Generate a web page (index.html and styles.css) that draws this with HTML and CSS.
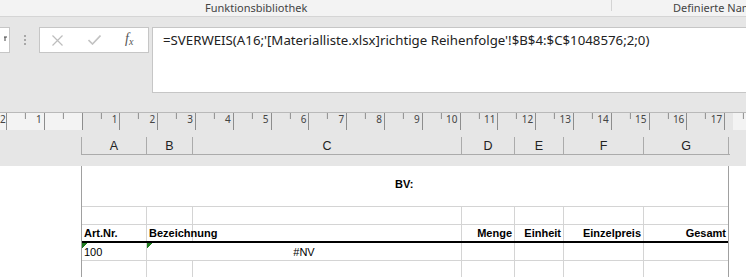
FILE: index.html
```html
<!DOCTYPE html>
<html lang="de">
<head>
    <meta charset="UTF-8">
    <title>Materialliste</title>
    <link rel="stylesheet" href="styles.css">
</head>
<body>

<!-- Ribbon group labels -->
<div class="ribbon-labels">
    <div class="group lib">Funktionsbibliothek</div>
    <div class="divider"></div>
    <div class="group names">Definierte Namen</div>
</div>

<!-- Formula bar -->
<div class="formula-bar">
    <div class="namebox">
        <svg width="4" height="8" viewBox="0 0 4 8"><path d="M0 2 L3 2 M1 2 L1 6" stroke="#444" fill="none"/></svg>
    </div>
    <div class="grip"><i></i><i></i><i></i></div>
    <div class="fx-buttons">
        <span class="btn">
            <svg width="11" height="11" viewBox="0 0 11 11"><path d="M0.5 0.5 L10.5 10.5 M10.5 0.5 L0.5 10.5" stroke="#bdbdbd" stroke-width="1.2" fill="none"/></svg>
        </span>
        <span class="btn">
            <svg width="13" height="10" viewBox="0 0 13 10"><path d="M0.5 5 L4.5 9 L12.5 0.5" stroke="#c2c2c2" stroke-width="1.6" fill="none"/></svg>
        </span>
        <span class="btn fx">f<small>x</small></span>
    </div>
    <div class="formula">=SVERWEIS(A16;'[Materialliste.xlsx]richtige Reihenfolge'!$B$4:$C$1048576;2;0)</div>
</div>

<!-- Ruler -->
<div class="ruler">
    <span class="num first">2</span>
    <span class="num">1</span>
    <span class="num"></span>
    <span class="num">1</span>
    <span class="num">2</span>
    <span class="num">3</span>
    <span class="num">4</span>
    <span class="num">5</span>
    <span class="num">6</span>
    <span class="num">7</span>
    <span class="num">8</span>
    <span class="num">9</span>
    <span class="num">10</span>
    <span class="num">11</span>
    <span class="num">12</span>
    <span class="num">13</span>
    <span class="num">14</span>
    <span class="num">15</span>
    <span class="num">16</span>
    <span class="num">17</span>
</div>

<!-- Column headers -->
<div class="col-headers">
    <div class="col a">A</div>
    <div class="col b">B</div>
    <div class="col c">C</div>
    <div class="col d">D</div>
    <div class="col e">E</div>
    <div class="col f">F</div>
    <div class="col g">G</div>
</div>

<!-- Sheet page -->
<div class="sheet">
    <div class="page">
        <div class="row title-row">
            <div class="bv">BV:</div>
        </div>
        <div class="row grid">
            <div class="cell"></div>
            <div class="cell"></div>
            <div class="cell"></div>
            <div class="cell"></div>
            <div class="cell"></div>
            <div class="cell"></div>
            <div class="cell"></div>
        </div>
        <div class="row grid head-row">
            <div class="cell">Art.Nr.</div>
            <div class="cell">Bezeichnung</div>
            <div class="cell"></div>
            <div class="cell right">Menge</div>
            <div class="cell right">Einheit</div>
            <div class="cell right">Einzelpreis</div>
            <div class="cell right">Gesamt</div>
        </div>
        <div class="row grid">
            <div class="cell flag">100</div>
            <div class="cell flag merged">#NV</div>
            <div class="cell"></div>
            <div class="cell"></div>
            <div class="cell"></div>
            <div class="cell"></div>
        </div>
        <div class="row grid">
            <div class="cell"></div>
            <div class="cell"></div>
            <div class="cell"></div>
            <div class="cell"></div>
            <div class="cell"></div>
            <div class="cell"></div>
            <div class="cell"></div>
        </div>
    </div>
</div>

</body>
</html>
```

FILE: styles.css
```css
body {
    margin: 0;
    background-color: #e6e6e6;
    font-family: "Noto Sans", "Open Sans", sans-serif;
    width: 746px;
    height: 277px;
    overflow: hidden;
}

/* ribbon labels */
.ribbon-labels {
    display: flex;
    height: 16px;
    background-color: #f3f3f3;
    border-bottom: 1px solid #d5d5d5;
    font-size: 11px;
    color: #444;
    line-height: 16px;
}

.group {
    flex: none;
    box-sizing: border-box;
    white-space: nowrap;
}

.group.lib {
    width: 611px;
    padding-left: 205px;
}

.divider {
    flex: none;
    width: 1px;
    height: 11px;
    background-color: #d4d4d4;
}

.group.names {
    padding-left: 61px;
}

/* formula bar */
.formula-bar {
    display: flex;
    align-items: flex-start;
    margin-top: 10px;
    height: 65px;
}

.namebox {
    box-sizing: border-box;
    width: 10px;
    height: 26px;
    background-color: #fff;
    border: 1px solid #c6c6c6;
    border-left: none;
    display: flex;
    align-items: center;
    justify-content: flex-end;
    padding: 0 1px 2px 0;
}

.grip {
    width: 29px;
    height: 26px;
    display: flex;
    flex-direction: column;
    align-items: center;
    justify-content: center;
    gap: 2px;
}

.grip i {
    display: block;
    width: 2px;
    height: 2px;
    background-color: #a8a8a8;
}

.fx-buttons {
    box-sizing: border-box;
    width: 110px;
    height: 26px;
    margin-right: 3px;
    background-color: #fff;
    border: 1px solid #c6c6c6;
    display: flex;
    align-items: center;
    gap: 25px;
    padding-left: 12px;
}

.btn {
    display: flex;
}

.btn.fx {
    margin-left: -1px;
    font-family: "Liberation Serif", serif;
    font-style: italic;
    font-size: 14px;
    line-height: 16px;
    color: #555;
}

.btn.fx small {
    font-size: 10px;
    margin-top: 3px;
}

.formula {
    box-sizing: border-box;
    flex: 1;
    height: 66px;
    background-color: #fff;
    border: 1px solid #c6c6c6;
    border-right: none;
    padding: 3px 0 0 10px;
    font-size: 13.25px;
    color: #222;
    white-space: nowrap;
    overflow: hidden;
}

/* ruler */
.ruler {
    display: flex;
    margin-top: 20px;
    height: 17px;
    border-top: 1px solid #b9b9b9;
    background:
        repeating-linear-gradient(90deg, #8d8d8d 0 1px, transparent 1px 37.8px) 6px 0 / 100% 17px repeat-x,
        repeating-linear-gradient(90deg, #8d8d8d 0 1px, transparent 1px 37.8px) 24.9px 0 / 100% 6px repeat-x,
        linear-gradient(90deg, #f3f3f3 0 82px, #e6e6e6 82px 733px, #f3f3f3 733px);
}

.num {
    flex: none;
    box-sizing: border-box;
    width: 37.8px;
    padding-right: 2px;
    text-align: right;
    font-size: 10px;
    line-height: 12px;
    color: #444;
}

.num.first {
    width: 6px;
    padding-right: 1px;
}

/* column headers */
.col-headers {
    display: flex;
    margin: 7px 0 0 81px;
    width: 648px;
    height: 17px;
    border-left: 1px solid #ababab;
    border-bottom: 1px solid #ababab;
}

.col {
    box-sizing: border-box;
    border-right: 1px solid #ababab;
    text-align: center;
    font-family: "Liberation Sans", Arial, sans-serif;
    font-size: 12.5px;
    line-height: 19px;
    color: #222;
}

.a { width: 65px; }
.b { width: 46px; }
.c { width: 269px; }
.d { width: 53px; }
.e { width: 49px; }
.f { width: 80px; }
.g { width: 85px; }

/* sheet */
.sheet {
    margin-top: 11px;
    background-color: #fff;
    height: 120px;
}

.page {
    margin-left: 81px;
    width: 646px;
    height: 120px;
    border-left: 1px solid #a0a0a0;
    border-right: 1px solid #a0a0a0;
    font-family: "Liberation Sans", Arial, sans-serif;
    font-size: 11px;
    color: #000;
}

.row {
    box-sizing: border-box;
    border-bottom: 1px solid #d4d4d4;
}

.title-row {
    height: 41px;
    padding: 12px 0 0 313px;
    font-weight: bold;
}

.grid {
    display: grid;
    grid-template-columns: 65px 46px 269px 53px 49px 80px 84px;
    height: 18px;
}

.cell {
    box-sizing: border-box;
    border-right: 1px solid #d4d4d4;
    padding: 3px 2px 0 2px;
    line-height: 13px;
    white-space: nowrap;
}

.cell:last-child {
    border-right: none;
}

.cell.right {
    text-align: right;
}

.head-row {
    font-weight: bold;
    border-bottom: 2px solid #000;
}

.head-row .cell {
    padding-top: 2px;
}

.flag {
    background: linear-gradient(135deg, #1f7a1f 0 4px, transparent 4px) no-repeat 0 0 / 7px 7px;
}

.merged {
    grid-column: span 2;
    text-align: center;
}
```
